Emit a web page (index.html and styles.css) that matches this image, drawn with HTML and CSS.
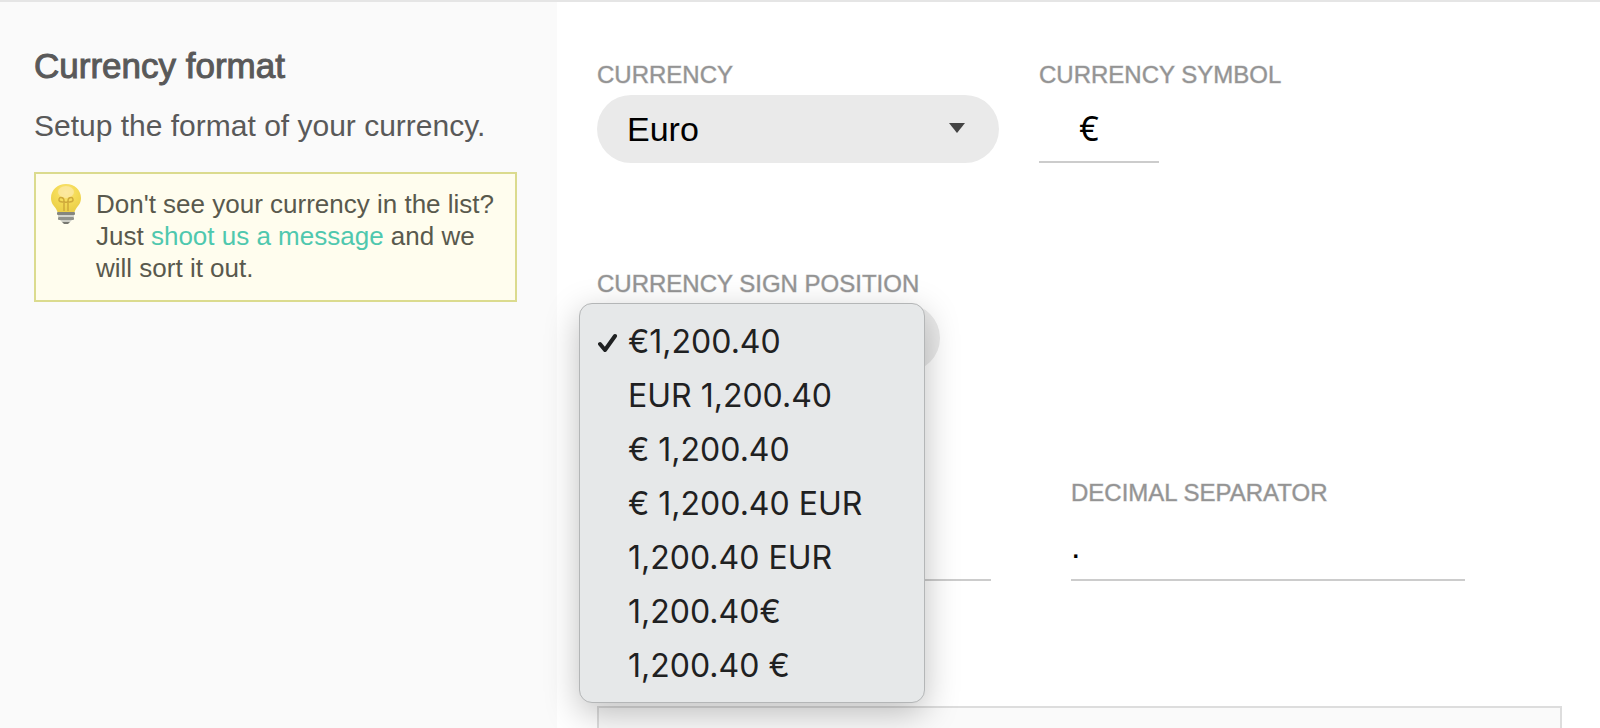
FILE: index.html
```
<!DOCTYPE html>
<html lang="en">
<head>
    <meta charset="UTF-8">
    <meta name="viewport" content="width=device-width, initial-scale=1.0">
    <title>Currency format</title>
    <link rel="stylesheet" href="styles.css">
</head>
<body>
    <aside class="sidebar">
        <h2>Currency format</h2>
        <p class="intro">Setup the format of your currency.</p>
        <div class="tip">
            <svg class="tip-icon" viewBox="0 0 32 40" aria-hidden="true">
                <defs>
                    <radialGradient id="bulb" cx="50%" cy="30%" r="65%">
                        <stop offset="0" stop-color="#fbe48c"/>
                        <stop offset="0.5" stop-color="#f5dc58"/>
                        <stop offset="1" stop-color="#ecd04a"/>
                    </radialGradient>
                </defs>
                <path d="M16 0C7.500 0 1 6 1 14c0 5 2.500 7.500 4.500 10 1.200 1.600 1.500 3 2 4h17c.5-1 .8-2.400 2-4 2-2.500 4.500-5 4.500-10C31 6 24.500 0 16 0z" fill="url(#bulb)"/>
                <ellipse cx="16" cy="8" rx="8" ry="6" fill="#fce9a8" opacity="0.7"/>
                <path d="M14 27V17c0-2-1.500-3.500-3.200-3.500S8 16.500 10 17.500s10 1 12 0 .9-4-.8-4S18 15 18 17v10" fill="none" stroke="#cfa93a" stroke-width="1.500"/>
                <rect x="7" y="28" width="18" height="3" rx="1" fill="#85867f"/>
                <rect x="8" y="31" width="16" height="2" fill="#d3d4cd"/>
                <rect x="8" y="33" width="16" height="3" rx="1" fill="#92938c"/>
                <path d="M10 36h12l-2 2h-8z" fill="#cccdc6"/>
                <path d="M12 38h8l-2 2h-4z" fill="#777871"/>
            </svg>
            <p>Don't see your currency in the list? Just <a href="#">shoot us a message</a> and we will sort it out.</p>
        </div>
    </aside>

    <main class="content">
        <form class="form">
            <div class="row">
                <div class="field field-currency">
                    <label for="currency">CURRENCY</label>
                    <div class="select-wrap">
                        <select id="currency">
                            <option>Euro</option>
                        </select>
                        <svg class="arrow" viewBox="0 0 16 10" aria-hidden="true"><path d="M0 0h16L8 10z" fill="#444"/></svg>
                    </div>
                </div>
                <div class="field">
                    <label for="symbol">CURRENCY SYMBOL</label>
                    <input class="symbol" type="text" id="symbol" value="€">
                </div>
            </div>

            <div class="row">
                <div class="field field-position">
                    <label for="position">CURRENCY SIGN POSITION</label>
                    <div class="select-wrap">
                        <select id="position"></select>
                    </div>
                    <ul class="menu" role="listbox" aria-label="Currency sign position">
                        <li role="option" aria-selected="true">
                            <svg class="check" viewBox="0 0 20 20" aria-hidden="true"><path d="M2 11l5 6L17 3" fill="none" stroke="#1f2122" stroke-width="4" stroke-linecap="round" stroke-linejoin="round"/></svg>
                            €1,200.40
                        </li>
                        <li role="option">EUR 1,200.40</li>
                        <li role="option">€ 1,200.40</li>
                        <li role="option">€ 1,200.40 EUR</li>
                        <li role="option">1,200.40 EUR</li>
                        <li role="option">1,200.40€</li>
                        <li role="option">1,200.40 €</li>
                    </ul>
                </div>
            </div>

            <div class="row row-separators">
                <div class="field field-separator">
                    <input type="text" aria-label="Thousands separator">
                </div>
                <div class="field field-separator">
                    <label for="decimal">DECIMAL SEPARATOR</label>
                    <input type="text" id="decimal" value=".">
                </div>
            </div>
        </form>
        <div class="preview"></div>
    </main>
</body>
</html>
```
FILE: styles.css
```
* {
    box-sizing: border-box;
}
body {
    margin: 0;
    min-height: 100vh;
    display: flex;
    border-top: 2px solid #e5e5e5;
    background: #fff;
    font-family: "Liberation Sans", Arial, sans-serif;
    color: #595959;
}
h2, p, ul {
    margin: 0;
    padding: 0;
}

/* left column */
.sidebar {
    flex: 0 0 557px;
    padding: 44px 40px 40px 34px;
    background: #fafafa;
}
.sidebar h2 {
    font-size: 35px;
    line-height: 40px;
    font-weight: normal;
    -webkit-text-stroke: 1px #595959;
}
.intro {
    margin-top: 22px;
    font-size: 30px;
    line-height: 36px;
}
.tip {
    display: flex;
    gap: 14px;
    margin-top: 28px;
    padding: 10px 14px 16px;
    border: 2px solid #dbdb8e;
    background: #fffdee;
}
.tip-icon {
    flex: none;
    width: 32px;
    height: 40px;
}
.tip p {
    margin-top: 4px;
    font-size: 26px;
    line-height: 32px;
    color: #59594d;
}
.tip a {
    color: #4fc8ae;
    text-decoration: none;
}

/* form */
.content {
    flex: 1;
    display: flex;
    flex-direction: column;
    padding: 57px 38px 0 40px;
}
.form {
    display: flex;
    flex-direction: column;
    gap: 105px;
}
.row {
    display: flex;
    align-items: flex-end;
    gap: 40px;
}
.row-separators {
    gap: 80px;
}
.field {
    position: relative;
}
.field-currency {
    flex: 0 1 402px;
}
.field-position {
    flex: 0 1 343px;
}
.field-separator {
    flex: 0 1 394px;
}
label {
    display: block;
    margin-bottom: 4px;
    font-size: 24px;
    line-height: 32px;
    color: #949494;
    -webkit-text-stroke: 1px rgba(148, 148, 148, 0.4);
}
select, input {
    display: block;
    width: 100%;
    height: 68px;
    font-family: inherit;
    font-size: 34px;
    color: #000;
    outline: none;
}
select {
    appearance: none;
    padding: 0 60px 0 30px;
    border: none;
    border-radius: 34px;
    background: #eaeaea;
}
input {
    padding: 0;
    border: none;
    border-bottom: 2px solid #ccc;
    background: transparent;
}
.symbol {
    width: 120px;
    padding: 0 20px 0 0;
    text-align: center;
    font-family: "Noto Sans", sans-serif;
}
.select-wrap {
    position: relative;
}
.arrow {
    position: absolute;
    top: 28px;
    right: 34px;
    width: 16px;
    height: 10px;
}

/* open drop-down */
.menu {
    position: absolute;
    z-index: 10;
    top: 35px;
    left: -18px;
    width: 346px;
    padding: 11px 0 9px;
    border: 1px solid #b4b6b7;
    border-radius: 13px;
    background: #e6e8e9;
    box-shadow: 0 10px 34px rgba(0, 0, 0, 0.25);
    list-style: none;
    font-family: Inter, sans-serif;
    font-size: 32px;
    line-height: 54px;
    color: #1f2122;
}
.menu li {
    position: relative;
    padding-left: 48px;
    white-space: nowrap;
}
.check {
    position: absolute;
    top: 18px;
    left: 18px;
    width: 20px;
    height: 20px;
}

.preview {
    flex: 1;
    margin-top: 125px;
    border: 2px solid #ddd;
    border-bottom: none;
    background: #fafafa;
}
```
